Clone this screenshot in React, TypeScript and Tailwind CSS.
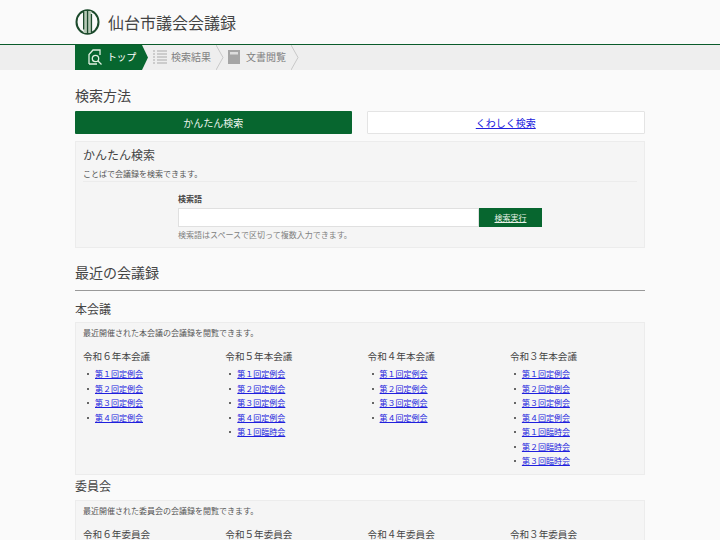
const font = { fontFamily: '"Noto Sans CJK JP", "DejaVu Sans", sans-serif' };

const cols = [
  { y: "令和6年", items: ["第1回定例会", "第2回定例会", "第3回定例会", "第4回定例会"] },
  { y: "令和5年", items: ["第1回定例会", "第2回定例会", "第3回定例会", "第4回定例会", "第1回臨時会"] },
  { y: "令和4年", items: ["第1回定例会", "第2回定例会", "第3回定例会", "第4回定例会"] },
  { y: "令和3年", items: ["第1回定例会", "第2回定例会", "第3回定例会", "第4回定例会", "第1回臨時会", "第2回臨時会", "第3回臨時会"] },
];

function zen(s: string) {
  return s.replace(/[0-9]/g, (c) => String.fromCharCode(c.charCodeAt(0) + 0xfee0));
}

function Logo() {
  return (
    <svg width="26" height="26" viewBox="0 0 26 26">
      <ellipse cx="12.5" cy="13" rx="11" ry="11.8" fill="none" stroke="#1c4a2c" strokeWidth="2" />
      <rect x="8.6" y="2" width="7.8" height="22" fill="#b7c9b7" />
      <rect x="8" y="1.5" width="1.3" height="19" fill="#1c4a2c" />
      <rect x="11.9" y="1.5" width="1.3" height="23" fill="#1c4a2c" />
      <rect x="15.8" y="5" width="1.3" height="19.5" fill="#1c4a2c" />
    </svg>
  );
}

export default function App() {
  return (
    <div className="h-[540px] overflow-hidden bg-[#fafafa] text-[#444]" style={font}>
      <header className="h-[44px] flex items-center pl-[75px] gap-[7px] pb-[1px]">
        <Logo />
        <span className="text-[16px] text-[#444]">仙台市議会会議録</span>
      </header>
      <nav className="h-[25px] border-t border-[#0a5c2b] bg-[#eeeeee] pl-[75px] flex box-content">
        <div className="relative w-[67px] bg-[#07662f] text-white text-[10px] leading-[12px] flex items-center pl-[11px] gap-[3px] pb-[1px]">
          <svg width="18" height="18" viewBox="0 0 18 18" fill="none" stroke="#dff0e0" strokeWidth="1.3">
            <path d="M3 16V6.5L7 2h7v5M3 16h8" />
            <circle cx="9.5" cy="10.5" r="3.2" />
            <path d="M12 13l3.5 3.5" />
          </svg>
          <span className="tracking-[-0.4px] mb-[1px]">トップ</span>
          <svg className="absolute left-full top-0" width="7" height="25" viewBox="0 0 7 25"><path d="M0 0l6 12.5-6 12.5z" fill="#07662f" /></svg>
        </div>
        <div className="relative w-[74px] pl-[11px] flex items-center gap-[4px] text-[10px] leading-[12px] text-[#808080] pb-[2px]">
          <svg width="14" height="16" viewBox="0 0 14 16" stroke="#aaa" strokeWidth="1">
            <path d="M0 2h2M4 2h10M0 5h2M4 5h10M0 8h2M4 8h10M0 11h2M4 11h10M0 14h2M4 14h10" />
          </svg>
          <span>検索結果</span>
          <svg className="absolute left-full top-0" width="8" height="25" viewBox="0 0 8 25" fill="none" stroke="#c8c8c8"><path d="M0 0l7 12.5-7 12.5" /></svg>
        </div>
        <div className="relative w-[75px] pl-[12px] flex items-center gap-[6px] text-[10px] leading-[12px] text-[#808080] pb-[2px]">
          <svg width="12" height="14" viewBox="0 0 12 14"><rect width="12" height="14" fill="#a5a5a5" /><rect x="2" y="2" width="8" height="2.5" fill="#ddd" /></svg>
          <span>文書閲覧</span>
          <svg className="absolute left-full top-0" width="8" height="25" viewBox="0 0 8 25" fill="none" stroke="#c8c8c8"><path d="M0 0l7 12.5-7 12.5" /></svg>
        </div>
      </nav>

      <main className="w-[570px] ml-[75px]">
        <h2 className="text-[14px] leading-[20px] mt-[15px] mb-[6px]">検索方法</h2>
        <div className="flex gap-[15px]">
          <div className="flex-1 h-[23px] pb-[1px] bg-[#07662f] rounded-[1px] text-[#eef5ee] text-[10px] flex items-center justify-center">かんたん検索</div>
          <div className="flex-1 h-[23px] pb-[1px] bg-white border border-[#e4e4e4] rounded-[1px] text-[10px] flex items-center justify-center">
            <a href="#" className="text-[#2020dd] underline">くわしく検索</a>
          </div>
        </div>
        <section className="mt-[7px] h-[107px] bg-[#f5f5f5] border border-[#ececec] px-[7px]">
          <h3 className="text-[12px] leading-[16px] mt-[5px]">かんたん検索</h3>
          <p className="text-[8px] leading-[12px] mt-[5px] pb-[1px] border-b border-[#ececec] text-[#555]">ことばで会議録を検索できます。</p>
          <div className="ml-[95px] mt-[11px]">
            <div className="text-[8px] leading-[12px] font-bold text-[#444]">検索語</div>
            <div className="flex mt-[3px]">
              <div className="w-[301px] h-[19px] bg-white border border-[#e0e0e0]" />
              <a href="#" className="w-[63px] h-[19px] bg-[#07662f] text-[#e8f2e8] underline text-[8px] flex items-center justify-center">検索実行</a>
            </div>
            <div className="text-[8px] leading-[12px] mt-[2px] text-[#808080]">検索語はスペースで区切って複数入力できます。</div>
          </div>
        </section>

        <h2 className="text-[14px] leading-[20px] mt-[14px] pb-[8px] border-b border-[#999]">最近の会議録</h2>

        <h3 className="text-[12px] leading-[16px] mt-[10px]">本会議</h3>
        <section className="mt-[5px] h-[153px] bg-[#f5f5f5] border border-[#ececec] px-[7px] overflow-hidden">
          <p className="text-[8px] leading-[12px] mt-[4px] text-[#555]">最近開催された本会議の会議録を閲覧できます。</p>
          <div className="grid grid-cols-[repeat(4,142.3px)] mt-[10px]">
            {cols.map((c) => (
              <div key={c.y}>
                <div className="text-[9.6px] leading-[14px]">{zen(c.y)}本会議</div>
                <ul className="mt-[4px] ml-[5px]">
                  {c.items.map((it, i) => (
                    <li key={i} className="h-[14.5px] flex items-center text-[8px]">
                      <span className="w-[2px] h-[2px] bg-[#666] mr-[6px] ml-[-1px]" />
                      <a href="#" className="text-[#2020dd] underline">{zen(it)}</a>
                    </li>
                  ))}
                </ul>
              </div>
            ))}
          </div>
        </section>

        <h3 className="text-[12px] leading-[16px] mt-[3px]">委員会</h3>
        <section className="mt-[6px] h-[60px] bg-[#f5f5f5] border border-[#ececec] px-[7px] overflow-hidden">
          <p className="text-[8px] leading-[12px] mt-[4px] text-[#555]">最近開催された委員会の会議録を閲覧できます。</p>
          <div className="grid grid-cols-[repeat(4,142.3px)] mt-[10px]">
            {cols.map((c) => (
              <div key={c.y} className="text-[9.6px] leading-[14px]">{zen(c.y)}委員会</div>
            ))}
          </div>
        </section>
      </main>
    </div>
  );
}
